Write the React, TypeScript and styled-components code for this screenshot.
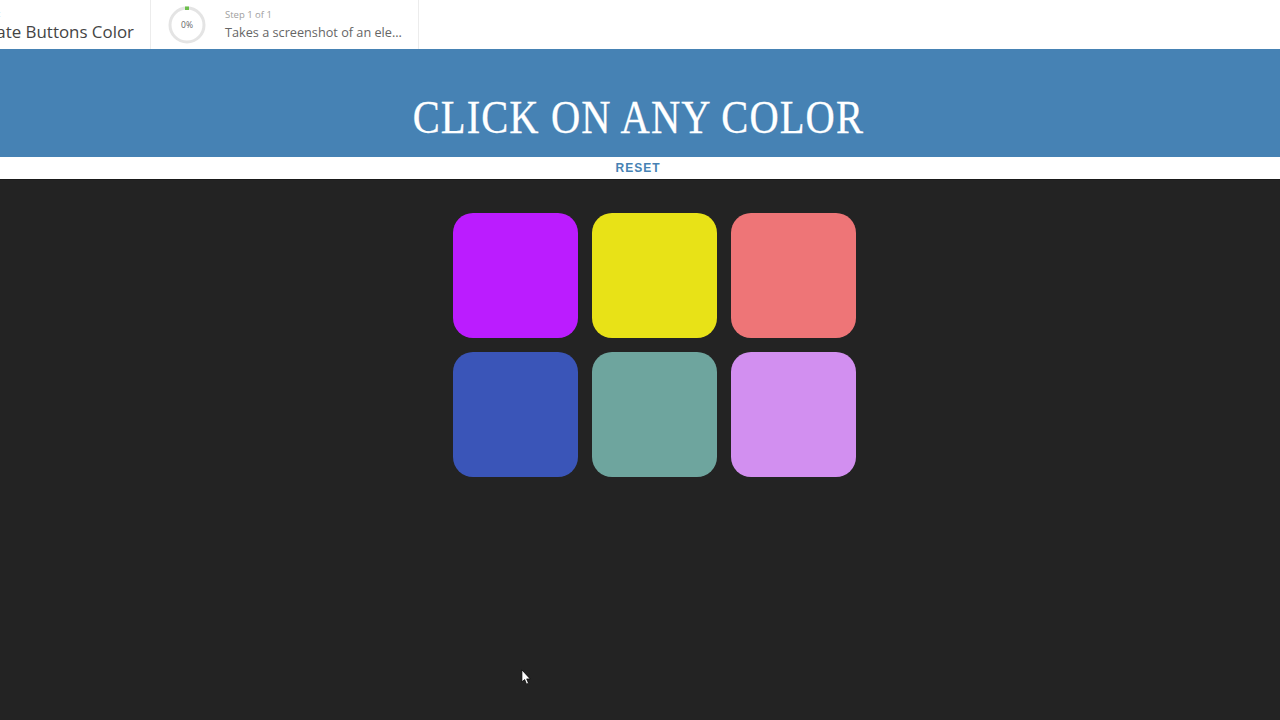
import styled, { createGlobalStyle } from "styled-components";

const colors = ["#bb1cff", "#e8e217", "#ee7577", "#3a55b8", "#6ea59e", "#d28ff0"];

const GlobalStyle = createGlobalStyle`
  html, body {
    margin: 0;
    padding: 0;
    height: 100%;
    overflow: hidden;
    background: #232323;
  }
`;

export default function App() {
  return (
    <Page>
      <GlobalStyle />
      <TopBar>
        <TitleCell>
          <Crumb>c</Crumb>
          <LessonTitle>Automate Buttons Color</LessonTitle>
        </TitleCell>
        <StepCell>
          <Progress>
            <svg width="38" height="38" viewBox="0 0 38 38">
              <circle cx="19" cy="19" r="17" fill="none" stroke="#e4e4e4" strokeWidth="3" />
              <rect x="17" y="0.5" width="4" height="3.5" fill="#6cbf4b" />
            </svg>
            <Percent>0%</Percent>
          </Progress>
          <StepText>
            <StepCount>Step 1 of 1</StepCount>
            <StepName>Takes a screenshot of an ele...</StepName>
          </StepText>
        </StepCell>
      </TopBar>
      <Header>
        <Title>CLICK ON ANY COLOR</Title>
      </Header>
      <ResetBar>
        <ResetLink>RESET</ResetLink>
      </ResetBar>
      <Stage>
        <Grid>
          {colors.map((color) => (
            <Swatch key={color} $color={color} />
          ))}
        </Grid>
      </Stage>
      <Cursor width="11" height="16.5" viewBox="0 0 12 18">
        <path
          d="M1 1 L1 14 L4 11.5 L6 16.5 L8.2 15.5 L6.2 10.8 L10 10.8 Z"
          fill="#fff"
          stroke="#000"
          strokeWidth="0.8"
        />
      </Cursor>
    </Page>
  );
}

const Page = styled.div`
  position: relative;
  display: flex;
  flex-direction: column;
  width: 1280px;
  height: 720px;
  overflow: hidden;
`;

const TopBar = styled.div`
  display: flex;
  height: 49px;
  background: #fff;
  font-family: "Open Sans", sans-serif;
`;

const TitleCell = styled.div`
  display: flex;
  flex-direction: column;
  align-items: flex-end;
  width: 151px;
  padding-right: 16px;
  box-sizing: border-box;
  border-right: 1px solid #ececec;
  overflow: hidden;
  white-space: nowrap;
`;

const Crumb = styled.div`
  align-self: flex-start;
  margin: 8px 0 0 -4px;
  height: 12px;
  font-size: 9px;
  line-height: 12px;
  color: #999;
`;

const LessonTitle = styled.div`
  font-size: 16.9px;
  line-height: 24px;
  color: #444;
`;

const StepCell = styled.div`
  display: flex;
  align-items: center;
  gap: 19px;
  width: 268px;
  padding-left: 17px;
  box-sizing: border-box;
  border-right: 1px solid #ececec;
`;

const Progress = styled.div`
  position: relative;
  display: flex;
  align-items: center;
  justify-content: center;
  width: 38px;
  height: 38px;
  flex-shrink: 0;
`;

const Percent = styled.span`
  position: absolute;
  font-size: 8.5px;
  color: #666;
`;

const StepText = styled.div`
  display: flex;
  flex-direction: column;
  gap: 1px;
  white-space: nowrap;
`;

const StepCount = styled.div`
  font-size: 9.5px;
  line-height: 14px;
  color: #a0a0a0;
`;

const StepName = styled.div`
  font-size: 12.7px;
  line-height: 18px;
  color: #666;
`;

const Header = styled.div`
  display: flex;
  justify-content: center;
  align-items: center;
  height: 108px;
  padding-top: 30px;
  box-sizing: border-box;
  background: #4682b4;
`;

const Title = styled.h1`
  margin: 0 4px 0 0;
  font-family: "Liberation Serif", serif;
  font-weight: 400;
  font-size: 46px;
  line-height: 52px;
  letter-spacing: 1.25px;
  color: #fff;
  transform: scaleX(0.88);
  -webkit-text-stroke: 0.3px #fff;
`;

const ResetBar = styled.div`
  display: flex;
  justify-content: center;
  align-items: center;
  height: 22px;
  padding-right: 4px;
  background: #fff;
  border-bottom: 1px solid #1a1a1a;
  box-sizing: content-box;
`;

const ResetLink = styled.span`
  font-family: "Liberation Sans", sans-serif;
  font-weight: 700;
  font-size: 12px;
  letter-spacing: 1px;
  color: #4682b4;
`;

const Stage = styled.div`
  flex: 1;
  display: flex;
  justify-content: center;
  padding: 32.5px 0 0 29px;
  background: #232323;
`;

const Grid = styled.div`
  display: grid;
  grid-template-columns: repeat(3, 125px);
  grid-auto-rows: 125px;
  gap: 14px;
`;

const Swatch = styled.div<{ $color: string }>`
  border-radius: 20px;
  background: ${(props) => props.$color};
`;

const Cursor = styled.svg`
  position: absolute;
  left: 521px;
  top: 669px;
`;
